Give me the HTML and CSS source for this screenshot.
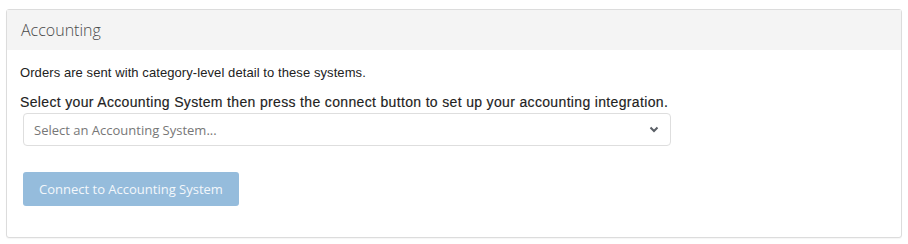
FILE: index.html
```
<!DOCTYPE html>
<html lang="en-US">
<head>
	<meta charset="UTF-8">
	<title>Accounting</title>
	<link rel="stylesheet" href="styles.css">
</head>
<body>
	<div class="panel">
		<div class="panel-heading">Accounting</div>
		<div class="panel-body">
			<p class="intro">Orders are sent with category-level detail to these systems.</p>
			<label class="field-label" for="acct">Select your Accounting System then press the connect button to set up your accounting integration.</label>
			<div class="select" id="acct">
				<span class="placeholder">Select an Accounting System...</span>
				<svg class="chevron" width="10" height="7" viewBox="0 0 10 7"><path d="M1.5 1.5 L5 5 L8.5 1.5" fill="none" stroke="#5a5f66" stroke-width="2"/></svg>
			</div>
			<button class="btn-connect" disabled>Connect to Accounting System</button>
		</div>
	</div>
</body>
</html>
```

FILE: styles.css
```
/* pagina */
body {
margin: 0;
padding: 9px 6px;
background: #fff;
font-family: "Liberation Sans", Arial, sans-serif;
color: #222;
}

/* panel principal */
.panel {
border: 1px solid #dcdcdc;
border-radius: 3px;
background: #fff;
box-shadow: 0 1px 1px rgba(0,0,0,0.04);
}
.panel-heading {
height: 40px;
line-height: 40px;
padding: 0 14px;
background: #f4f4f4;
font-family: "Open Sans", sans-serif;
font-weight: 300;
font-size: 16px;
color: #4a4a4a;
}
.panel-body {
padding: 14px 13px 31px;
}

/* textos */
.intro {
margin: 0 0 10px;
font-size: 13px;
line-height: 18px;
letter-spacing: 0.08px;
color: #222;
}
.field-label {
display: block;
font-size: 14px;
line-height: 20px;
letter-spacing: 0.34px;
-webkit-text-stroke: 0.15px #222;
color: #222;
}

/* select falso */
.select {
display: flex;
align-items: center;
justify-content: space-between;
box-sizing: border-box;
width: 648px;
height: 33px;
margin: 1px 0 0 3px;
padding: 0 11px 0 10px;
border: 1px solid #dedede;
border-radius: 4px;
font-family: "Open Sans", sans-serif;
font-size: 13px;
color: #777;
}
.chevron {
display: block;
}

/* boton */
.btn-connect {
display: block;
box-sizing: border-box;
width: 216px;
height: 34px;
margin: 26px 0 0 3px;
padding: 0 16px;
border: none;
border-radius: 3px;
background: #95bcdc;
font-family: "Open Sans", sans-serif;
font-size: 13px;
color: #f3f7fb;
text-align: left;
}
```
